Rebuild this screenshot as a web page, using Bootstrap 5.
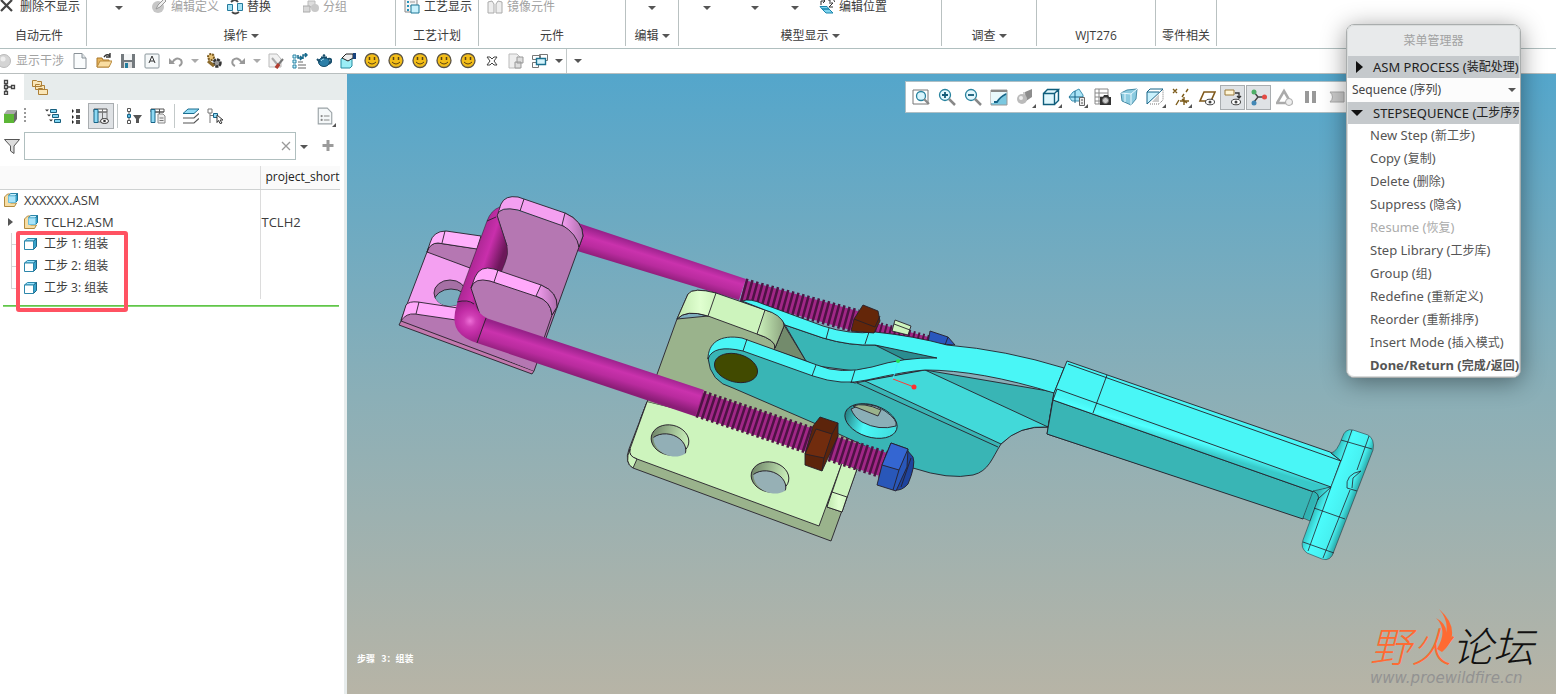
<!DOCTYPE html>
<html lang="zh-CN">
<head>
<meta charset="utf-8">
<meta name="viewport" content="width=device-width, initial-scale=1">
<title>XXXXXX.ASM</title>
<link href="https://cdn.jsdelivr.net/npm/bootstrap@5.3.0/dist/css/bootstrap.min.css" rel="stylesheet">
<style>
body{font:12px/16px "Open Sans","Noto Sans CJK SC",sans-serif;color:#3c3c3c;height:100vh;overflow:hidden;background:#fff}
button{border:0;background:none;padding:0;color:inherit;white-space:nowrap}
svg{display:block;flex:none}
.ic{width:16px;height:16px}
.ic-half{width:12px;height:16px}
.zh{font-size:12px}
.off{color:#a2a2a2}
.caret{width:0;height:0;border:4px solid transparent;border-top-color:#555;border-bottom:0;display:inline-block;flex:none;vertical-align:middle}
.caret-off{border-top-color:#aaa}
.caret-box{width:14px;height:24px}
.ribbon{height:49px;border-bottom:1px solid #b0bfbf}
.grp{height:46px;border-right:1px solid #b9c1c1;flex:none}
.grp-top{height:14px}
.grp-name{height:43px}
.w-auto-part{width:87px}.w-ops{width:309px}.w-plan{width:83px}.w-comp{width:147px}.w-edit{width:53px}
.w-view{width:263px}.w-ask{width:95px}.w-wjt{width:119px}.w-rel{width:61px}
.more{width:48px;text-align:left}
.more-m{width:40px}
.more-s{width:28px}
.quick{height:25px;border-bottom:1px solid #b9bfbf}
.qb{width:24px;height:24px}
.vline{width:1px;align-self:stretch;background:#c3c9c9}
.side{width:347px;border-right:3px solid #e7ecec}
.tabs{height:26px;background:#e7ecec}
.tab-on{width:24px;background:#fff}
.tools{height:32px}
.grip{margin-right:13px}
.tool-on{background:#dfe2e5;outline:1px solid #a9adb0}
.filter-box{height:28px;width:272px;border:1px solid #b0bfbf}
.filter-box input{border:0;outline:0;min-width:0}
.tree{table-layout:fixed;width:340px;border-collapse:collapse;font-size:13px;margin-top:6px}
.tree th,.tree td{height:22px;padding:0;font-weight:400;overflow:hidden;white-space:nowrap}
.tree th{background:#fafafa;border-bottom:1px solid #cfd2d2;height:23px;color:#222}
.tree th:first-child,.tree td:first-child{width:260px;border-right:1px solid #dcdcdc}
.tree th+th{padding-left:5px;font-size:12px}
.tree td+td{padding-left:1px}
.branch{width:20px;height:22px;flex:none;position:relative}
.branch::before{content:"";position:absolute;left:11px;top:0;height:22px;border-left:1px solid #d5d5d5}
.branch::after{content:"";position:absolute;left:11px;top:11px;width:6px;border-top:1px solid #d5d5d5}
.branch-last::before{height:11px}
.twist{width:20px;height:22px;padding-left:8px}
.insert-here{height:2px;background:linear-gradient(#4ebc37,#9adf88);width:336px;margin:6px 0 0 3px}
.mark-box{position:absolute;left:16px;top:157px;width:112px;height:81px;border:4px solid #ff5262;border-radius:3px;pointer-events:none}
.canvas{background:linear-gradient(#54a6cb,#8bafb7 52%,#b7b4a6);min-width:0}
.model{width:100%;height:auto}
.view-tools{position:absolute;top:7px;left:558px;right:200px;height:32px;background:#fff;border:1px solid #aebfc5;gap:3px;padding-left:3px;overflow:hidden}
.vb{width:23px;height:23px;position:relative;flex:none}
.vb .ic{width:18px;height:18px}
.corner::after{content:"";position:absolute;right:0;bottom:1px;border:2px solid #555;border-top-color:transparent;border-left-color:transparent}
.step-note{position:absolute;left:10px;bottom:27px;color:#fff;font:bold 9px/16px "Noto Sans CJK SC",sans-serif;white-space:pre}
.logo{position:absolute;right:18px;bottom:8px;width:168px}
.logo-name{font:italic 300 41px/44px "Noto Sans CJK SC",sans-serif;color:#111;white-space:nowrap}
.logo-name b{font-weight:300;color:#ff6a32}
.logo-url{font:italic 15px/16px "DejaVu Sans",sans-serif;color:#929292}
.flame{position:absolute;left:62px;top:-13px}
.mgr{position:absolute;top:24px;right:35px;width:175px;border:1px solid #a9adad;outline:1px solid #d9dcdc;outline-offset:-2px;border-radius:8px;background:#fff;box-shadow:0 4px 24px rgba(0,0,0,.42);overflow:hidden;font-family:"Noto Sans","Noto Sans CJK SC",sans-serif;font-size:13px}
.mgr-title{height:31px;background:#e8eaeb;color:#a2a2a2}
.mgr-head{height:22px;background:#c5c9cc;color:#222;width:100%}
.mgr select{height:24px;border:0;background:#fcfcfc;padding:0 5px;width:100%;appearance:none;color:#444;font-size:12px}
.mgr-pick .caret{position:absolute;right:4px;top:10px}
.mgr-item{height:23px;width:100%;text-align:left;padding-left:23px;color:#555}
.mgr-item:disabled{color:#ababab}
</style>
</head>
<body class="d-flex flex-column position-relative">
<svg width="0" height="0" class="position-absolute" aria-hidden="true">
<defs>
<symbol id="i-x" viewBox="0 0 16 16"><path d="M1 1L12 12M12 1L1 12" stroke="#444" stroke-width="2.2"/></symbol>
<symbol id="i-edit" viewBox="0 0 16 16"><circle cx="7" cy="8" r="6" fill="#c7c7c7"/><path d="M5 10L7 6L13 0L15 2L9 8Z" fill="#eee" stroke="#999"/></symbol>
<symbol id="i-swap" viewBox="0 0 16 16"><path d="M.5 5.500h5v6h-5zM10.500 4.500h5v7h-5z" fill="#a8e4f5" stroke="#247a9c"/><path d="M4 3q4-4 7 0M12 13q-4 3-7 0" fill="none" stroke="#444" stroke-width="1.800"/></symbol>
<symbol id="i-group" viewBox="0 0 16 16"><path d="M5 2h7v6H5z" fill="#ddd" stroke="#bbb"/><circle cx="12" cy="9" r="4" fill="#c9c9c9"/><path d="M0 7h7v6H0z" fill="#d8d8d8" stroke="#aaa"/></symbol>
<symbol id="i-proc" viewBox="0 0 16 16"><path d="M1 0h12v13H1z" fill="#f4f4f4" stroke="#888"/><path d="M3 3h2M3 7h2M3 11h2" stroke="#2793bb" stroke-width="2"/><path d="M6 3h5M6 7h3" stroke="#999"/><path d="M7 6h8v8H7z" fill="#c9f2fd" stroke="#1d7796"/></symbol>
<symbol id="i-mirror" viewBox="0 0 16 16"><path d="M1 3l4-1 2 3v9H1zM15 3l-4-1-2 3v9h6z" fill="#eee" stroke="#aaa"/></symbol>
<symbol id="i-pos" viewBox="0 0 16 16"><path d="M3 10h7l4 4H7zM1 7.500h7l2 2.500H3z" fill="#7fd3ee" stroke="#1b86ad"/><path d="M2 6V2h4M4 0l2 2-2 2M9 1h2v2M10 4h4l-4 4h4M14 0l2 3" fill="none" stroke="#333"/></symbol>
<symbol id="i-ball" viewBox="4 0 12 16"><circle cx="8" cy="8" r="6.5" fill="#d4d4d4" stroke="#bbb"/><circle cx="7" cy="6" r="2.5" fill="#eee"/></symbol>
<symbol id="i-new" viewBox="0 0 16 16"><path d="M2 .5h8L14 5v10.500H2z" fill="#fafcfd" stroke="#8a9298"/><path d="M10 .5V5h4" fill="#dfe5e8" stroke="#8a9298"/></symbol>
<symbol id="i-open" viewBox="0 0 16 16"><path d="M1 14V5h5l1 2h6v7z" fill="#e7b55c" stroke="#a9772a"/><path d="M1 14l3-6h12l-3 6z" fill="#f9dda1" stroke="#b98a3c"/><path d="M8 4q3-4 6-1M14 0v4h-4" fill="none" stroke="#333" stroke-width="1.400"/></symbol>
<symbol id="i-save" viewBox="0 0 16 16"><path d="M1 1h14v14H1z" fill="#747a7e"/><path d="M4 1h8v6H4z" fill="#f4f6f7"/><path d="M4 9h8v6H4z" fill="#ddd"/><path d="M5 10h3v5H5z" fill="#247d9d"/></symbol>
<symbol id="i-a" viewBox="0 0 16 16"><rect x="1" y="1" width="14" height="14" rx="1" fill="#f5f8f9" stroke="#8a969c"/><path d="M5 10L8 3L11 10M6 8h4" fill="none" stroke="#333"/></symbol>
<symbol id="i-undo" viewBox="0 0 16 16"><path d="M4 10Q8 3 13 7Q15 11 11 13" fill="none" stroke="#999" stroke-width="2"/><path d="M1 5v6h6z" fill="#999"/></symbol>
<symbol id="i-gear" viewBox="0 0 16 16"><circle cx="5" cy="4" r="3" fill="#e5c074" stroke="#7a5a20" stroke-width="2" stroke-dasharray="2 1"/><circle cx="11" cy="10" r="3.500" fill="#999" stroke="#333" stroke-width="2.500" stroke-dasharray="3 1"/><path d="M2 8l6 5" stroke="#8b6a2c" stroke-width="3"/></symbol>
<symbol id="i-erase" viewBox="0 0 16 16"><path d="M1 1h8l4 5v8H1z" fill="#f1f1f1" stroke="#bbb"/><path d="M4 5l5 6" stroke="#aaa" stroke-width="2"/><path d="M15 6l-5 6" stroke="#777" stroke-width="2"/><path d="M11 11l-3 4" stroke="#b23d30" stroke-width="3.500"/></symbol>
<symbol id="i-list" viewBox="0 0 16 16"><path d="M1 2h3v3H1zM1 7h3v3H1zM1 12h3v3H1z" fill="#c8effb" stroke="#2b83a3"/><path d="M6 12h8M6 15h8M6 9h5" stroke="#999" stroke-width="1.500"/><path d="M6 2v3h4M8 3l2 2-2 2M11 6V2h4M13 0l2 2-2 2" fill="none" stroke="#176a8c" stroke-width="1.500"/></symbol>
<symbol id="i-tea" viewBox="0 0 16 16"><ellipse cx="8" cy="9" rx="5.500" ry="4.500" fill="#2c7fa8" stroke="#174e6c"/><path d="M5 4.500h6M1 6l3 3M12 6q4-1 3 3l-2 2" stroke="#174e6c" fill="none" stroke-width="2"/><circle cx="8" cy="2.500" r="1.300" fill="#174e6c"/><path d="M5 8q1-2 3-2" stroke="#a3dcf2" fill="none"/></symbol>
<symbol id="i-hand" viewBox="0 0 16 16"><path d="M1 6l2-2h9v9l-2 2H1z" fill="#9beef6" stroke="#258ba0"/><path d="M2 5l4-4h7v4l-5 3z" fill="#eee" stroke="#222"/><path d="M13 0h3v6h-3z" fill="#19437c"/></symbol>
<symbol id="i-smile" viewBox="0 0 16 16"><circle cx="8" cy="7.500" r="7" fill="#f3bd18" stroke="#5b5345" stroke-width="1.300"/><path d="M5.500 4v3M10.500 4v3" stroke="#5b4310" stroke-width="1.500"/><path d="M4 9q4 4 8 0" fill="none" stroke="#5b4310"/></symbol>
<symbol id="i-x2" viewBox="0 0 16 16"><path d="M3 4h3l2 2 2-2h3l-3 4 3 4h-3l-2-2-2 2H3l3-4z" fill="#fff" stroke="#444"/></symbol>
<symbol id="i-doccube" viewBox="0 0 16 16"><path d="M1 1h8l3 3v11H1z" fill="#eee" stroke="#bbb"/><path d="M9 4h6v6H9zM7 9h6v6H7z" fill="#ddd" stroke="#999"/></symbol>
<symbol id="i-win" viewBox="0 0 16 16"><path d="M7.500 1.500h8v6h-8zM.500 2.500h8v4h-8zM.500 9.500h6v5h-6z" fill="#fff" stroke="#777"/><path d="M4.500 5.500h9v6h-9z" fill="#d5f4fc" stroke="#1b7190" stroke-width="1.400"/></symbol>
<symbol id="i-tree" viewBox="0 0 16 16"><path d="M4.500 1.500h3v3h-3zM4.500 6.500h3v3h-3zM4.500 12.500h3v3h-3zM11.500 6.500h3v3h-3zM6 4.500v2M6 9.500v3M7.500 8h4" fill="#fff" stroke="#444" stroke-width="1.300"/></symbol>
<symbol id="i-fold" viewBox="0 0 16 16"><path d="M.5 1.500h4l1 1h4v5h-9zM3.500 5.500h4l1 1h4v4h-9zM6.500 9.500h4l1 1h4v5h-9z" fill="#fae6b8" stroke="#ad8038"/></symbol>
<symbol id="i-green" viewBox="0 0 16 16"><path d="M0 6l3-4h10l-3 4z" fill="#aaa"/><path d="M10 6l3-4v9l-3 4z" fill="#666"/><path d="M0 6h10v9H0z" fill="#5cb636"/></symbol>
<symbol id="i-exp" viewBox="0 0 16 16"><path d="M5.500 1.500h6v3h-6zM7.500 6.500h6v3h-6zM9.500 11.500h6v3h-6z" fill="#81d5f2" stroke="#185f7e"/><path d="M0 1.500h4l-2 2zM2 6.500h4l-2 2zM4 11.500h4l-2 2z" fill="#333"/></symbol>
<symbol id="i-dots" viewBox="0 0 16 16"><path d="M7 1h4v4H7zM7 7h4v4H7zM7 12h4v4H7z" fill="#555"/><path d="M3 1v4l2-2zM3 7v4l2-2zM3 12v4l2-2z" fill="#222"/></symbol>
<symbol id="i-cols" viewBox="0 0 16 16"><path d="M1 1h13v3H1z" fill="#fff" stroke="#555"/><path d="M5 4h9v10H5M9.500 1v12" fill="none" stroke="#777"/><path d="M1 1.500h4v13H1z" fill="#8fd9f3" stroke="#176488"/><ellipse cx="11.500" cy="13" rx="4" ry="2.500" fill="#fff" stroke="#333"/><circle cx="11.500" cy="13" r="1.300" fill="#333"/></symbol>
<symbol id="i-treef" viewBox="0 0 16 16"><path d="M1.500.5h3v3h-3zM1.500 12.500h3v3h-3zM3 3.500v3M3 9.500v3" fill="#fff" stroke="#555"/><path d="M1.500 6.500h3v3h-3z" fill="#5dbbe0" stroke="#176488"/><path d="M7 7h9l-3 4v4h-3v-4z" fill="#555"/></symbol>
<symbol id="i-coldoc" viewBox="0 0 16 16"><path d="M1 1h13v3H1zM9.500 1v6M5 4h9" fill="#fff" stroke="#555"/><path d="M1 1.500h4v13H1z" fill="#8fd9f3" stroke="#176488"/><path d="M8 6h5l2 2v7H8z" fill="#eee" stroke="#888"/><path d="M9.500 10h4M9.500 12.500h4" stroke="#777"/></symbol>
<symbol id="i-layers" viewBox="0 0 16 16"><path d="M5 1h11l-5 4.500H0z" fill="#93dcf5" stroke="#1c6f91"/><path d="M0 10h11l5-4.500M0 15h11l5-4.500" fill="none" stroke="#555" stroke-width="1.200"/></symbol>
<symbol id="i-treesel" viewBox="0 0 16 16"><path d="M1 1h4v4H1zM3 5v10M3 7.500h4" fill="#fff" stroke="#777"/><path d="M6.500 5.500h4v4h-4z" fill="#8fd9f3" stroke="#176488"/><path d="M10 7l6 5h-3l2 3-2 .5-1.500-3-1.500 2z" fill="#fff" stroke="#333"/></symbol>
<symbol id="i-doc" viewBox="0 0 16 16"><path d="M2 1h8l4 4v10H2z" fill="#f5f8f9" stroke="#9aa2a6"/><circle cx="5" cy="8" r="1" fill="#888"/><circle cx="5" cy="11.500" r="1" fill="#888"/><path d="M7 8h5M7 11.500h5" stroke="#888"/></symbol>
<symbol id="i-funnel" viewBox="0 0 16 16"><path d="M.5 1.500h15L10 8v7.500L6.500 13V8z" fill="#ddd" stroke="#555"/></symbol>
<symbol id="i-plus" viewBox="0 0 16 16"><path d="M8 2v11M2.500 7.500h11" stroke="#9b9b9b" stroke-width="3"/></symbol>
<symbol id="i-asm" viewBox="0 0 16 16"><path d="M.5 5l3-3h3v9h6l-2 3.500H.5z" fill="#f7dda3" stroke="#b08a3f"/><path d="M4.500 4l2-2.500h7L11.500 4z" fill="#c8f1ff" stroke="#2c87ab"/><path d="M11.500 4l2-2.500v7l-2 2z" fill="#38a3cb" stroke="#1d7396"/><path d="M4.500 4h7v6.500h-7z" fill="#a9e4fa" stroke="#6fc0dd"/></symbol>
<symbol id="i-step" viewBox="0 0 16 16"><path d="M.5 5l3-2.500h9L9.500 5z" fill="#9be5ff" stroke="#2c87ab"/><path d="M9.500 5l3-2.500v8l-3 3z" fill="#38a3cb" stroke="#1d6687"/><path d="M.5 5h9v8.500h-9z" fill="#fff" stroke="#2c87ab"/></symbol>
<symbol id="i-zfit" viewBox="0 0 18 18"><path d="M1 2h15v14H1z" fill="#fff" stroke="#777"/><circle cx="9" cy="8" r="4.500" fill="#d8f5fd" stroke="#29839f" stroke-width="1.300"/><path d="M12 11l5 5" stroke="#888" stroke-width="2.200"/></symbol>
<symbol id="i-zin" viewBox="0 0 18 18"><circle cx="7" cy="7" r="5.500" fill="#e4f8fe" stroke="#29839f" stroke-width="1.300"/><path d="M4 7h6M7 4v6" stroke="#135b78" stroke-width="1.800"/><path d="M11 11l6 6" stroke="#888" stroke-width="2.500"/></symbol>
<symbol id="i-zout" viewBox="0 0 18 18"><circle cx="7" cy="7" r="5.500" fill="#e4f8fe" stroke="#29839f" stroke-width="1.300"/><path d="M4 7h6" stroke="#135b78" stroke-width="1.800"/><path d="M11 11l6 6" stroke="#888" stroke-width="2.500"/></symbol>
<symbol id="i-paint" viewBox="0 0 18 18"><path d="M1 2h16v15H1z" fill="#7bc8e0" stroke="#999"/><path d="M1 4h16L6 15H1z" fill="#e9f8fc"/><path d="M1 2h16v2H1z" fill="#888"/><path d="M4 14h3Q10 9 16 6" fill="none" stroke="#176488" stroke-width="1.800"/></symbol>
<symbol id="i-shade" viewBox="0 0 18 18"><path d="M7 4h5v7H7z" fill="#ccc"/><path d="M9 4l7-3v8l-6 4z" fill="#8d8d8d"/><circle cx="6" cy="11" r="5" fill="#bbb"/><circle cx="5" cy="10" r="2" fill="#eee"/></symbol>
<symbol id="i-wire" viewBox="0 0 18 18"><path d="M1.500 5.500h11v11h-11zM1.500 5.500l4-4h11l-4 4M16.500 1.500v11l-4 4" fill="#dff7fd" stroke="#0f5e7c" stroke-width="1.400"/></symbol>
<symbol id="i-views" viewBox="0 0 18 18"><path d="M1 9l4-5 6-3 4 6v6H4z" fill="#a9e4f6" stroke="#4192b2"/><path d="M1 9h14M7 3v12" stroke="#176488"/><path d="M11.500 9.500h5v8h-5z" fill="#eee" stroke="#666"/><path d="M13 12h2M13 15h2" stroke="#555"/></symbol>
<symbol id="i-cam" viewBox="0 0 18 18"><path d="M1 1h13v15H1zM1 5h13M1 9h13M1 13h13M5 1v15" fill="#fff" stroke="#888"/><path d="M6 9h3l1-2h4l1 2h2v8H6z" fill="#333"/><circle cx="11.500" cy="12.500" r="3" fill="#ccc" stroke="#777"/></symbol>
<symbol id="i-persp" viewBox="0 0 18 18"><path d="M1 5l6-3 10-1-1 10-5 6-9-4z" fill="#8ccbe0" stroke="#458ba6"/><path d="M1 5l10 1 6-5M11 6v11M5 5v9" stroke="#eaf9ff" fill="none"/></symbol>
<symbol id="i-section" viewBox="0 0 18 18"><path d="M1 4h12L1 16z" fill="#c9f1fd"/><path d="M1 16V4l3-3h13M1 16L17 1M1 4h12" stroke="#176488" fill="none"/><path d="M4 16h9l4-4V2" fill="none" stroke="#777" stroke-dasharray="1 1"/><path d="M6 14l7-8v8z" fill="#ccc"/></symbol>
<symbol id="i-datum" viewBox="0 0 18 18"><path d="M1 1l4 4M5 1L1 5M16 1l-2 3M12 6l-2 3M7 12l-3 5M8 13h9M12 9v8M10 11l5 4" stroke="#7b5a18" stroke-width="1.400"/></symbol>
<symbol id="i-plane" viewBox="0 0 18 18"><path d="M6 4h11l-4 9H2z" fill="#fff" stroke="#80591b" stroke-width="1.600"/><ellipse cx="12" cy="14" rx="4.500" ry="2.800" fill="#fff" stroke="#444"/><circle cx="12" cy="14" r="1.500" fill="#444"/></symbol>
<symbol id="i-anno" viewBox="0 0 18 18"><path d="M1 2h9v5H1z" fill="#fff6d7" stroke="#9b7b3b"/><path d="M11 5h4v5M13 8l2 2 2-2" fill="none" stroke="#333" stroke-width="1.300"/><ellipse cx="12" cy="14" rx="4.500" ry="2.800" fill="#fff" stroke="#444"/><circle cx="12" cy="14" r="1.500" fill="#444"/></symbol>
<symbol id="i-spin" viewBox="0 0 18 18"><path d="M4 4l4 5 7 0M8 9l-4 5" stroke="#444" stroke-width="1.400" fill="none"/><circle cx="4" cy="4" r="2.500" fill="#4eae66"/><circle cx="14.500" cy="9" r="2.500" fill="#e34b45"/><circle cx="4" cy="15" r="2.500" fill="#4388b6"/></symbol>
<symbol id="i-tri" viewBox="0 0 18 18"><path d="M8 3l7 12H1z" fill="none" stroke="#aaa" stroke-width="2.500"/><circle cx="13" cy="14" r="3.500" fill="#eee" stroke="#aaa"/></symbol>
<symbol id="i-pause" viewBox="0 0 18 18"><path d="M3 3h4v12H3zM10 3h4v12h-4z" fill="#999"/></symbol>
<symbol id="i-part" viewBox="0 0 18 18"><path d="M2 4h14v10H2q5-5 0-10z" fill="#ccc" stroke="#aaa"/></symbol>
</defs>
</svg>

<header class="ribbon d-flex">
  <section class="grp w-auto-part">
    <div class="grp-top d-flex align-items-center"><button class="d-flex align-items-center"><svg class="ic me-1"><use href="#i-x"/></svg>删除不显示</button></div>
    <div class="grp-name d-flex align-items-center justify-content-center pe-2">自动元件</div>
  </section>
  <section class="grp w-ops">
    <div class="grp-top d-flex align-items-center ps-4">
      <button class="px-1 me-4" aria-label="更多"><i class="caret"></i></button>
      <button class="off d-flex align-items-center gap-1 me-2"><svg class="ic"><use href="#i-edit"/></svg>编辑定义</button>
      <button class="d-flex align-items-center gap-1 me-4"><svg class="ic"><use href="#i-swap"/></svg>替换</button>
      <button class="off d-flex align-items-center gap-1 ms-2"><svg class="ic"><use href="#i-group"/></svg>分组</button>
    </div>
    <div class="grp-name d-flex align-items-center justify-content-center"><button>操作 <i class="caret"></i></button></div>
  </section>
  <section class="grp w-plan">
    <div class="grp-top d-flex align-items-center ps-2"><button class="d-flex align-items-center gap-1"><svg class="ic"><use href="#i-proc"/></svg>工艺显示</button></div>
    <div class="grp-name d-flex align-items-center justify-content-center">工艺计划</div>
  </section>
  <section class="grp w-comp">
    <div class="grp-top d-flex align-items-center ps-2"><button class="off d-flex align-items-center gap-1"><svg class="ic"><use href="#i-mirror"/></svg>镜像元件</button></div>
    <div class="grp-name d-flex align-items-center justify-content-center">元件</div>
  </section>
  <section class="grp w-edit">
    <div class="grp-top d-flex align-items-center justify-content-center"><button aria-label="更多"><i class="caret"></i></button></div>
    <div class="grp-name d-flex align-items-center justify-content-center"><button>编辑 <i class="caret"></i></button></div>
  </section>
  <section class="grp w-view">
    <div class="grp-top d-flex align-items-center ps-4">
      <button class="more" aria-label="外观"><i class="caret"></i></button>
      <button class="more more-m" aria-label="分解"><i class="caret"></i></button>
      <button class="more more-s" aria-label="视图"><i class="caret"></i></button>
      <button class="d-flex align-items-center gap-1"><svg class="ic"><use href="#i-pos"/></svg>编辑位置</button>
    </div>
    <div class="grp-name d-flex align-items-center justify-content-center"><button>模型显示 <i class="caret"></i></button></div>
  </section>
  <section class="grp w-ask"><div class="grp-top"></div><div class="grp-name d-flex align-items-center justify-content-center"><button>调查 <i class="caret"></i></button></div></section>
  <section class="grp w-wjt"><div class="grp-top"></div><div class="grp-name d-flex align-items-center justify-content-center">WJT276</div></section>
  <section class="grp w-rel"><div class="grp-top"></div><div class="grp-name d-flex align-items-center justify-content-center">零件相关</div></section>
</header>

<nav class="quick d-flex align-items-center" id="quick" aria-label="快速访问工具栏">
  <button class="off d-flex align-items-center gap-1 me-1"><svg class="ic-half"><use href="#i-ball"/></svg>显示干涉</button>
</nav>

<main class="d-flex flex-grow-1 overflow-hidden">
  <aside class="side flex-shrink-0 position-relative">
    <div class="tabs d-flex">
      <button class="tab-on d-flex align-items-center" aria-label="模型树"><svg class="ic"><use href="#i-tree"/></svg></button>
      <button class="ps-2" aria-label="文件夹"><svg class="ic"><use href="#i-fold"/></svg></button>
    </div>
    <div class="tools d-flex align-items-center">
      <button class="ps-1" aria-label="模型"><svg class="ic"><use href="#i-green"/></svg></button>
      <svg class="ms-1 grip" width="4" height="16"><path d="M1 0v16" stroke="#999" stroke-width="2" stroke-dasharray="2 2"/></svg>
      <button class="d-flex qb align-items-center justify-content-center" aria-label="展开"><svg class="ic"><use href="#i-exp"/></svg></button>
      <button class="d-flex qb align-items-center justify-content-center" aria-label="层级"><svg class="ic"><use href="#i-dots"/></svg></button>
      <button class="d-flex qb tool-on align-items-center justify-content-center" aria-label="树列"><svg class="ic"><use href="#i-cols"/></svg></button>
      <span class="vline my-1 mx-1"></span>
      <button class="d-flex qb align-items-center justify-content-center" aria-label="过滤"><svg class="ic"><use href="#i-treef"/></svg></button>
      <button class="d-flex qb align-items-center justify-content-center" aria-label="列文件"><svg class="ic"><use href="#i-coldoc"/></svg></button>
      <span class="vline my-1 mx-1"></span>
      <button class="d-flex qb align-items-center justify-content-center" aria-label="层"><svg class="ic"><use href="#i-layers"/></svg></button>
      <button class="d-flex qb align-items-center justify-content-center" aria-label="选择"><svg class="ic"><use href="#i-treesel"/></svg></button>
      <button class="vb corner ms-auto me-2 d-flex align-items-center justify-content-center" aria-label="设置"><svg class="ic"><use href="#i-doc"/></svg></button>
    </div>
    <div class="d-flex align-items-center ps-1 mb-1">
      <svg class="ic me-1"><use href="#i-funnel"/></svg>
      <div class="filter-box d-flex align-items-center">
        <input class="flex-grow-1" type="text" aria-label="过滤模型树">
        <button class="px-1" aria-label="清除"><svg width="10" height="10"><path d="M1 1l8 8M9 1L1 9" stroke="#999" stroke-width="1.300"/></svg></button>
      </div>
      <button class="px-1 me-1" aria-label="过滤选项"><i class="caret"></i></button>
      <button class="ms-1" aria-label="添加"><svg class="ic"><use href="#i-plus"/></svg></button>
    </div>
    <table class="tree">
      <thead><tr><th aria-label="名称"></th><th>project_short</th></tr></thead>
      <tbody>
        <tr><td><div class="d-flex align-items-center gap-1 ps-1"><svg class="ic"><use href="#i-asm"/></svg>XXXXXX.ASM</div></td><td></td></tr>
        <tr><td><div class="d-flex align-items-center gap-1"><button class="twist" aria-label="展开 TCLH2"><svg width="6" height="8"><path d="M0 0l5 4-5 4z" fill="#555"/></svg></button><svg class="ic"><use href="#i-asm"/></svg>TCLH2.ASM</div></td><td>TCLH2</td></tr>
        <tr><td><div class="d-flex align-items-center zh"><span class="branch"></span><svg class="ic mx-1"><use href="#i-step"/></svg>工步 1: 组装</div></td><td></td></tr>
        <tr><td><div class="d-flex align-items-center zh"><span class="branch"></span><svg class="ic mx-1"><use href="#i-step"/></svg>工步 2: 组装</div></td><td></td></tr>
        <tr><td><div class="d-flex align-items-center zh"><span class="branch branch-last"></span><svg class="ic mx-1"><use href="#i-step"/></svg>工步 3: 组装</div></td><td></td></tr>
      </tbody>
    </table>
    <div class="insert-here"></div>
    <div class="mark-box"></div>
  </aside>

  <section class="canvas flex-grow-1 position-relative">
    <svg class="model" viewBox="347 74 1209 620" stroke-linejoin="round" role="img" aria-label="装配模型">
      <defs>
        <linearGradient id="rodA" gradientUnits="userSpaceOnUse" x1="596" y1="354" x2="588" y2="380"><stop offset="0" stop-color="#98218a"/><stop offset=".35" stop-color="#ca32ad"/><stop offset=".65" stop-color="#b92b9e"/><stop offset="1" stop-color="#8a1d76"/></linearGradient>
        <linearGradient id="rodB" gradientUnits="userSpaceOnUse" x1="666" y1="251" x2="658" y2="277"><stop offset="0" stop-color="#98218a"/><stop offset=".35" stop-color="#ca32ad"/><stop offset=".65" stop-color="#b92b9e"/><stop offset="1" stop-color="#8a1d76"/></linearGradient>
        <linearGradient id="rodC" gradientUnits="userSpaceOnUse" x1="472" y1="260" x2="498" y2="269"><stop offset="0" stop-color="#ac2794"/><stop offset=".45" stop-color="#c92fac"/><stop offset="1" stop-color="#6c175a"/></linearGradient>
        <radialGradient id="elbow" gradientUnits="userSpaceOnUse" cx="470" cy="321" r="20"><stop offset="0" stop-color="#ee6fd8"/><stop offset=".3" stop-color="#d040b5"/><stop offset=".6" stop-color="#c22da6"/><stop offset="1" stop-color="#a3238c"/></radialGradient>
        <linearGradient id="gRound" x1="0" x2="1"><stop offset="0" stop-color="#bfe8ad"/><stop offset=".6" stop-color="#e0ffd0"/><stop offset="1" stop-color="#cdf4bd"/></linearGradient>
        <linearGradient id="gRound2" x1="0" x2="1"><stop offset="0" stop-color="#cdf4bd"/><stop offset="1" stop-color="#8ca47f"/></linearGradient>
        <linearGradient id="pRound" x1="0" x2="1"><stop offset="0" stop-color="#f49ff1"/><stop offset="1" stop-color="#b06eae"/></linearGradient>
        <linearGradient id="hole" x1="0" x2="1"><stop offset="0" stop-color="#71866a"/><stop offset="1" stop-color="#cdf4bd"/></linearGradient>
        <linearGradient id="eye" x1="0" x2="1"><stop offset="0" stop-color="#257f82"/><stop offset=".4" stop-color="#4bf8f8"/><stop offset="1" stop-color="#40dcdc"/></linearGradient>
        <linearGradient id="strip" gradientUnits="userSpaceOnUse" x1="1200" y1="436" x2="1196" y2="450"><stop offset="0" stop-color="#48f4f4"/><stop offset=".4" stop-color="#50ffff"/><stop offset="1" stop-color="#38c9c9"/></linearGradient>
        <linearGradient id="tee" gradientUnits="userSpaceOnUse" x1="1321" y1="485" x2="1357" y2="499"><stop offset="0" stop-color="#2fb3b3"/><stop offset=".3" stop-color="#4bfcfc"/><stop offset=".75" stop-color="#47efef"/><stop offset="1" stop-color="#208a8a"/></linearGradient>
        <clipPath id="c1"><ellipse cx="450" cy="293" rx="16" ry="13"/></clipPath>
        <clipPath id="c2"><ellipse cx="670" cy="440" rx="19" ry="15" transform="rotate(12 670 440)"/></clipPath>
        <clipPath id="c3"><ellipse cx="770" cy="477" rx="19" ry="15" transform="rotate(12 770 477)"/></clipPath>
      </defs>
      <g stroke="#26202a" stroke-width=".9">
        <!-- upper rod and its thread -->
        <path d="M578 223L746 279L739 300L574 250Z" fill="url(#rodB)" stroke="none"/>
        <g stroke="none" fill="none">
          <path d="M743 290L856 321" stroke="#a12787" stroke-width="20"/><path d="M743 290L856 321" stroke="#4e1244" stroke-width="24" stroke-dasharray="2.500 2.800"/>
          <path d="M875 328L932 343" stroke="#a12787" stroke-width="10"/><path d="M875 328L932 343" stroke="#4e1244" stroke-width="14" stroke-dasharray="2 2.800"/>
        </g>
        <!-- pink bracket -->
        <path d="M427 252L401 320L440 336L520 300L480 236Z" fill="#f4a0f1"/>
        <path d="M427 252Q429 243 438 243L478 249L470 268Z" fill="#b577b2"/>
        <path d="M427 252L430 243Q433 231 446 231L481 236L477 249L438 243Q430 243 427 252Z" fill="#ffb0fc"/>
        <path d="M445 231L442 243" fill="none"/>
        <ellipse cx="450" cy="293" rx="16" ry="13" fill="#a670a5"/><ellipse cx="451" cy="302" rx="17" ry="13" fill="#7aabbd" clip-path="url(#c1)"/>
        <path d="M401 322Q406 313 415 314L458 320L548 330L534 371Z" fill="#b577b2" stroke="none"/>
        <path d="M401 321L399 325L532 374L534 371Z" fill="#c279ae"/>
        <path d="M401 321L406 305Q409 301 418 302L458 308L456 320L415 314Q406 313 401 321Z" fill="#ffa9fb"/>
        <path d="M419 302L416 314" fill="none"/>
        <path d="M497 215Q499 208 513 209L566 227Q578 234 579 247L534 371L470 345L478 300L505 262L507 246Z" fill="#b577b2" stroke="none"/>
        <path d="M579 247L534 371M497 215L507 246" fill="none"/>
        <path d="M497 215L501 204Q505 195 518 197L565 213Q583 221 583 236L579 247Q578 234 566 227L518 210Q500 206 497 215Z" fill="#f4a0f1"/>
        <path d="M562 225L565 213Q583 221 583 236L579 247Q577 234 562 225Z" fill="url(#pRound)"/>
        <path d="M524 199L520 211" fill="none"/>
        <!-- U-bolt -->
        <path d="M500 207Q491 210 487 221L458 300L466 320L484 315L505 263Q509 254 507 246L497 216Z" fill="url(#rodC)" stroke-width=".5"/>
        <path d="M487 221L496 217" fill="none"/>
        <path d="M471 288Q474 279 486 280L538 297Q551 301 552 315L540 352L481 318Z" fill="#b577b2" stroke="none"/>
        <path d="M552 315L541 347M471 288L481 318" fill="none"/>
        <path d="M471 288L475 277Q480 265 494 269L541 285Q558 292 557 307L552 315Q551 301 538 297L490 281Q474 277 471 288Z" fill="#ffa9fb"/>
        <path d="M536 296L541 285Q558 292 557 307L552 315Q551 301 536 296Z" fill="url(#pRound)"/>
        <path d="M498 270L494 282" fill="none"/>
        <!-- green bracket -->
        <path d="M677 319L647 402L640 420L840 460L880 440L775 348L784 325L708 316Z" fill="#9ab38c"/>
        <path d="M784 325L806 361L774 350Z" fill="#738b6c"/>
        <path d="M677 319L688 294Q693 287 716 293L765 310Q785 315 784 326L775 348Q776 340 757 334L708 316Q686 309 677 319Z" fill="#cdf4bd"/>
        <path d="M677 319L688 294Q693 287 716 293L708 316Q686 309 677 319Z" fill="url(#gRound)"/>
        <path d="M765 310Q785 315 784 326L775 348Q776 340 757 334Z" fill="url(#gRound2)"/>
        <path d="M647 402L629 449Q624 463 633 468L831 541L857 469L840 455L700 415Z" fill="#9ab38c"/>
        <path d="M647 402L630 449Q628 456 637 459L819 526L842 463L700 415Z" fill="#cdf4bd" stroke="none"/>
        <path d="M647 402L630 449Q628 456 637 459L819 526L842 463" fill="none"/>
        <path d="M630 449Q624 463 633 468L637 459Q628 456 630 449Z" fill="#cdf4bd"/>
        <path d="M842 463L857 469L842 512L827 507Z" fill="#cdf4bd"/><path d="M832 492L847 497L842 512L827 507Z" fill="url(#gRound)"/>
        <ellipse cx="670" cy="440" rx="19" ry="15" transform="rotate(12 670 440)" fill="url(#hole)"/><ellipse cx="667" cy="449" rx="19" ry="15" transform="rotate(12 667 449)" fill="#92afb6" clip-path="url(#c2)"/>
        <ellipse cx="770" cy="477" rx="19" ry="15" transform="rotate(12 770 477)" fill="url(#hole)"/><ellipse cx="767" cy="486" rx="19" ry="15" transform="rotate(12 767 486)" fill="#96b0b5" clip-path="url(#c3)"/>
        <path d="M895 320L911 326L908 335L892 331Z" fill="#cdf4bd"/><path d="M894 324L910 330" fill="none"/>
        <path d="M930 331L948 337L955 345L928 343Z" fill="#2957bd"/>
        <!-- handle lever -->
        <path d="M785 325L823 338Q850 346 875 345L937 358L900 363L855 371L817 366L806 361Z" fill="#39b5b5"/>
        <path d="M875 345L905 350L937 358L905 360Z" fill="#2a8d90"/>
        <path d="M708 358Q710 382 733 388L830 430L913 468Q949 480 973 475C989 471 992 458 1001 444Q1016 426 1048 427L1054 392L925 370L855 383L743 350Q713 342 708 358Z" fill="#39b5b5"/>
        <path d="M865 381L925 370L1048 427Q1020 425 1001 444Z" fill="#42d9d9"/>
        <path d="M857 383L998 447" fill="none"/>
        <path d="M742 301Q750 298 763 304L823 326Q850 335 875 332Q914 336 947 345Q1006 350 1064 368L1054 393Q980 370 925 370Q907 371 867 380Q842 386 813 376L743 351Q713 344 708 359C708 343 720 334 742 338L817 365Q840 375 872 367Q904 357 937 358L875 345Q850 346 823 338L785 325Q780 314 765 310Z" fill="#49f6f6"/>
        <path d="M829 328L826 339M869 332L865 344M747 339L743 351M816 365L812 376M855 370L851 383" fill="none"/>
        <ellipse cx="736" cy="368" rx="22" ry="14" transform="rotate(15 736 368)" fill="#414a00"/>
        <ellipse cx="871" cy="421" rx="27" ry="16" transform="rotate(18 871 421)" fill="url(#eye)"/>
        <path d="M851 409Q868 399 885 411Q898 420 896 426Q879 431 862 422Q854 417 851 409Z" fill="#8aafb7"/>
        <path d="M853 406Q863 402 881 410L878 416Z" fill="#9ab38c"/>
        <path d="M1067 361L1330 452L1341 460L1331 487L1303 518L1047 434L1054 393Z" fill="#49f6f6"/>
        <path d="M1053 400L1314 492L1303 519L1047 434Z" fill="#39b5b5"/>
        <path d="M1057 389L1331 487L1314 492L1053 400Z" fill="url(#strip)"/>
        <path d="M1068 364L1341 461M1107 375L1093 413" fill="none"/>
        <path d="M1331 453Q1337 452 1342 438Q1345 428 1353 430L1368 435Q1375 439 1373 450L1334 551Q1331 562 1322 559L1307 553Q1300 548 1303 540L1310 521L1303 518L1313 491L1331 487L1341 461Z" fill="url(#tee)" stroke-width=".5"/>
        <path d="M1352 430L1341 461M1331 487L1308 551M1369 436L1357 470M1350 490L1323 558M1341 440L1372 449M1314 508L1345 519M1303 542L1334 553M1331 487L1318 499L1310 521M1313 491Q1320 494 1318 500M1341 461L1331 453M1361 471Q1345 474 1347 488L1357 491M1361 471L1353 478L1352 488" fill="none" stroke-width=".8"/>
        <!-- lower rod, thread and nuts -->
        <path d="M455 312L458 300L474 303Q479 315 487 318L477 343Q464 339 458 331Q453 324 455 312Z" fill="url(#elbow)" stroke="none"/>
        <path d="M457 302Q468 299 474 304" fill="none"/>
        <path d="M486 318L704 390L697 417L477 343Z" fill="url(#rodA)" stroke="none"/><path d="M486 318L477 343" fill="none"/>
        <g stroke="none" fill="none">
          <path d="M699 404L815 442M832 448L885 465" stroke="#a12787" stroke-width="24"/>
          <path d="M700 404L815 442M832 448L885 465" stroke="#4e1244" stroke-width="28" stroke-dasharray="2.500 2.800"/>
        </g>
        <path d="M820 417L838 423L838 436L822 471L805 465L805 454L813 426Z" fill="#5c240b"/>
        <path d="M816 429L832 434L824 458L805 454Z" fill="#712c0e"/><path d="M832 434L838 423M824 458L822 471" fill="none"/>
        <path d="M863 305L878 311L880 321L874 333L851 331L854 319Z" fill="#642609"/><path d="M854 319L875 327L880 316" fill="none"/>
        <path d="M907 450L913 457Q916 465 908 484Q902 491 895 490L890 480Z" fill="#1e439d"/>
        <path d="M891 443L908 449L907 467L896 491L877 485L882 465Z" fill="#2957b9"/><path d="M891 443L908 449L899 470L882 465Z" fill="#3466d2"/><path d="M899 470L893 490M911 458L901 487" fill="none"/>
        <path d="M948 337L945 345" fill="none"/>
      </g>
      <path d="M893 379L898 361" stroke="#42efff"/><circle cx="898" cy="361" r="2" fill="#25e652"/><path d="M893 379L914 387" stroke="#ff3a35"/><circle cx="914" cy="387" r="2.500" fill="#ff3030"/>
    </svg>
    <div class="view-tools d-flex align-items-center" id="viewTools" role="toolbar" aria-label="图形工具栏"></div>
    <div class="step-note">步骤   3：组装</div>
    <div class="logo">
      <div class="logo-name"><b>野火</b>论坛</div>
      <a class="logo-url d-block text-decoration-none mt-1" href="#">www.proewildfire.cn</a>
      <svg class="flame" width="22" height="44"><path d="M7 0Q24 15 19 31Q16 38 10 43L5 40Q12 28 10 20Q9 14 4 9Q15 15 14 24Q17 12 7 0Z" fill="#ff6a32"/></svg>
    </div>
  </section>
</main>

<div class="mgr">
  <div class="mgr-title zh d-flex align-items-center justify-content-center">菜单管理器</div>
  <button class="mgr-head d-flex align-items-center"><svg class="ms-2 me-2" width="10" height="12"><path d="M1 0l7 6-7 6z" fill="#111"/></svg>ASM PROCESS (<span class="zh">装配处理</span>)</button>
  <div class="mgr-pick position-relative"><select aria-label="Sequence"><option>Sequence (序列)</option></select><i class="caret"></i></div>
  <button class="mgr-head d-flex align-items-center overflow-hidden"><svg class="ms-1 me-2" width="14" height="8"><path d="M0 1h12l-6 6z" fill="#111"/></svg>STEPSEQUENCE (<span class="zh">工步序列</span>)</button>
  <button class="mgr-item d-block">New Step (<span class="zh">新工步</span>)</button>
  <button class="mgr-item d-block">Copy (<span class="zh">复制</span>)</button>
  <button class="mgr-item d-block">Delete (<span class="zh">删除</span>)</button>
  <button class="mgr-item d-block">Suppress (<span class="zh">隐含</span>)</button>
  <button class="mgr-item d-block" disabled>Resume (<span class="zh">恢复</span>)</button>
  <button class="mgr-item d-block">Step Library (<span class="zh">工步库</span>)</button>
  <button class="mgr-item d-block">Group (<span class="zh">组</span>)</button>
  <button class="mgr-item d-block">Redefine (<span class="zh">重新定义</span>)</button>
  <button class="mgr-item d-block">Reorder (<span class="zh">重新排序</span>)</button>
  <button class="mgr-item d-block">Insert Mode (<span class="zh">插入模式</span>)</button>
  <button class="mgr-item d-block fw-bold">Done/Return (<span class="zh">完成/返回</span>)</button>
</div>

<script src="https://cdn.jsdelivr.net/npm/bootstrap@5.3.0/dist/js/bootstrap.bundle.min.js"></script>
<script>
const icon = n => `<svg class="ic"><use href="#i-${n}"/></svg>`;
const center = 'd-flex align-items-center justify-content-center';
const quick = ['new','open','save','a','undo','^off','gear','redo','^off','erase','list','tea','hand','smile','smile','smile','smile','smile','x2','doccube','win','^','|','^'];
document.getElementById('quick').insertAdjacentHTML('beforeend', quick.map(n => {
  if (n === '|') return '<span class="vline me-1"></span>';
  if (n[0] === '^') return `<button class="caret-box ${center}" aria-label="更多"><i class="caret ${n === '^off' ? 'caret-off' : ''}"></i></button>`;
  if (n === 'redo') return `<button class="qb ${center}" aria-label="重做"><svg class="ic" viewBox="0 0 16 16"><g transform="matrix(-1 0 0 1 16 0)"><use href="#i-undo"/></g></svg></button>`;
  return `<button class="qb ${center}" aria-label="${n}">${icon(n)}</button>`;
}).join(''));
const views = ['zfit','zin','zout','paint','shade+','wire+','views+','cam','persp','section+','datum+','plane','anno*','spin*','tri','pause','part'];
document.getElementById('viewTools').innerHTML = views.map(v => {
  const n = v.replace(/[+*]/, '');
  return `<button class="vb ${center} ${v.endsWith('+') ? 'corner' : ''} ${v.endsWith('*') ? 'tool-on' : ''}" aria-label="${n}">${icon(n)}</button>`;
}).join('');
</script>
</body>
</html>
